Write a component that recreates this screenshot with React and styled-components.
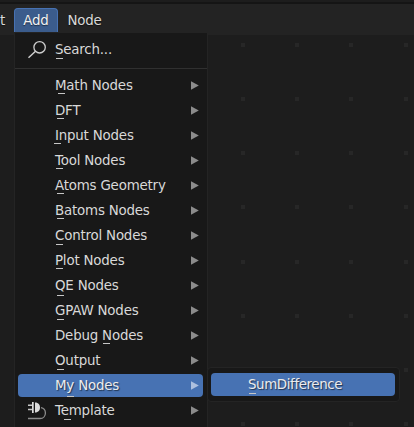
import React from "react";
import styled, { createGlobalStyle } from "styled-components";

const GlobalStyle = createGlobalStyle`
  * { box-sizing: border-box; }
  body { margin: 0; background: #1d1d1d; overflow: hidden; }
`;

const Editor = styled.div`
  position: relative;
  display: flex;
  flex-direction: column;
  width: 414px;
  height: 427px;
  overflow: hidden;
  background: #1d1d1d;
  color: #d9d9d9;
  font-family: "DejaVu Sans", sans-serif;
  font-size: 13.4px;
  letter-spacing: -0.2px;
  white-space: pre;
`;

const AreaEdge = styled.div`
  flex: none;
  height: 4px;
  background: #1d1d1d;
  border-bottom: 2px solid #151515;
`;

const MenuBar = styled.header`
  flex: none;
  display: flex;
  height: 31px;
  background: #232323;
`;

const BarItem = styled.div`
  flex: none;
  display: flex;
  justify-content: ${(p) => p.$align || "center"};
  width: ${(p) => p.$width}px;
  height: 28px;
  margin-top: 4px;
  padding-top: 5px;
  line-height: 16px;
  text-shadow: 0 1px 1px rgba(0, 0, 0, 0.5);
`;

const ActiveBarItem = styled(BarItem)`
  height: 24px;
  color: #f2f2f2;
  background: #3b5c8c;
  border: 1px solid #4772b3;
  border-bottom: 0;
  border-radius: 4px 4px 0 0;
  padding-top: 4px;
`;

const Canvas = styled.main`
  position: relative;
  flex: 1;
`;

const GridDots = styled.svg`
  display: block;
  width: 414px;
  height: 392px;
  fill: #272727;
`;

const Popup = styled.div`
  position: absolute;
  left: ${(p) => p.$left}px;
  top: ${(p) => p.$top}px;
  display: flex;
  flex-direction: column;
  width: ${(p) => p.$width}px;
  height: ${(p) => p.$height}px;
  background: #181818;
  border: 1px solid #242424;
  border-top-width: ${(p) => (p.$attached ? 0 : 1)}px;
  border-radius: ${(p) => (p.$attached ? 0 : 4)}px;
  padding: 4px 4px 0 3px;
`;

const Separator = styled.div`
  flex: none;
  height: 1px;
  margin: 6px -4px 4px -3px;
  background: #303030;
`;

const Row = styled.div`
  position: relative;
  flex: none;
  display: flex;
  align-items: center;
  height: 23px;
  margin: 1px 0;
  padding-right: 4px;
  border-radius: 4px;
  line-height: 16px;
  letter-spacing: ${(p) => (p.$tight ? "-0.4px" : "inherit")};
  color: ${(p) => (p.$active ? "#ececec" : "#d9d9d9")};
  background: ${(p) => (p.$active ? "#4772b3" : "transparent")};
  text-shadow: ${(p) => (p.$active ? "1px 1px 1px rgba(0,0,0,.55)" : "none")};
`;

const IconSlot = styled.span`
  flex: none;
  display: flex;
  align-items: center;
  width: 37px;
  height: 23px;
`;

const Label = styled.span`
  flex: 1;
`;

const Mnemonic = styled.i`
  position: absolute;
  left: ${(p) => p.$x}px;
  top: ${(p) => p.$y}px;
  width: 7px;
  height: 1px;
  background: #c6c6c6;
`;

const Glyph = styled.svg`
  display: block;
  flex: none;
`;

const Arrow = ({ active }) => (
  <Glyph width="8" height="9" viewBox="0 0 8 9">
    <path d="M0 .3 7.8 4.5 0 8.7Z" fill={active ? "#adc0df" : "#8c8c8c"} />
  </Glyph>
);

const SearchIcon = () => (
  <Glyph width="37" height="23" viewBox="0 0 37 23" fill="none" stroke="#cfcfcf" strokeWidth="1.3">
    <circle cx="21.6" cy="9.3" r="5.7" />
    <path d="M17.5 13.3 10.5 19.7" strokeWidth="1.5" />
  </Glyph>
);

const PlugIcon = () => (
  <Glyph width="37" height="23" viewBox="0 0 37 23" fill="none">
    <path d="M14 3h1.7v11H14ZM17 3.5c3.6 0 5 2.4 5 5s-1.4 5-5 5Z" fill="#dcdcdc" />
    <path d="M10 6.2h4M10 10.5h4" stroke="#c8c8c8" strokeWidth="1.4" />
    <path d="M23 8.7c3 .6 4.4 2.8 4.4 5.2 0 3-2 5.6-5.4 5.6H10" stroke="#8c8c8c" strokeWidth="1.3" />
  </Glyph>
);

const items = [
  { label: "Math Nodes", x: 40, y: 19 },
  { label: "DFT", x: 39, y: 19 },
  { label: "Input Nodes", x: 36, y: 19 },
  { label: "Tool Nodes", x: 38, y: 19 },
  { label: "Atoms Geometry", x: 39, y: 19 },
  { label: "Batoms Nodes", x: 39, y: 19 },
  { label: "Control Nodes", x: 38, y: 20 },
  { label: "Plot Nodes", x: 38, y: 19 },
  { label: "QE Nodes", x: 39, y: 21 },
  { label: "GPAW Nodes", x: 39, y: 20 },
  { label: "Debug Nodes", x: 85, y: 19 },
  { label: "Output", x: 39, y: 20 },
  { label: "My Nodes", x: 49, y: 22, active: true },
  { label: "Template", x: 46, y: 20, icon: <PlugIcon /> },
];

const columns = [241, 295, 349, 404];
const rows = [8, 62, 116, 170, 225, 279, 333, 387];

export default function App() {
  return (
    <>
      <GlobalStyle />
      <Editor>
        <AreaEdge />
        <MenuBar>
          <BarItem $width={14} $align="flex-start">
            <span>t</span>
          </BarItem>
          <ActiveBarItem $width={44}>Add</ActiveBarItem>
          <BarItem $width={53}>Node</BarItem>
        </MenuBar>
        <Canvas>
          <GridDots viewBox="0 0 414 392">
            {rows.map((y) =>
              columns.map((x) => <rect key={`${x}-${y}`} x={x} y={y} width="4" height="4" />)
            )}
          </GridDots>
          <Popup $attached $left={14} $top={-2} $width={194} $height={400}>
            <Row>
              <IconSlot><SearchIcon /></IconSlot>
              <Label>Search...</Label>
              <Mnemonic $x={38} $y={20} />
            </Row>
            <Separator />
            {items.map((item) => (
              <Row key={item.label} $active={item.active}>
                <IconSlot>{item.icon}</IconSlot>
                <Label>{item.label}</Label>
                <Arrow active={item.active} />
                <Mnemonic $x={item.x} $y={item.y} />
              </Row>
            ))}
          </Popup>
          <Popup $left={207} $top={332} $width={193} $height={35}>
            <Row $active $tight>
              <IconSlot />
              <Label>SumDifference</Label>
              <Mnemonic $x={38} $y={20} />
            </Row>
          </Popup>
        </Canvas>
      </Editor>
    </>
  );
}
